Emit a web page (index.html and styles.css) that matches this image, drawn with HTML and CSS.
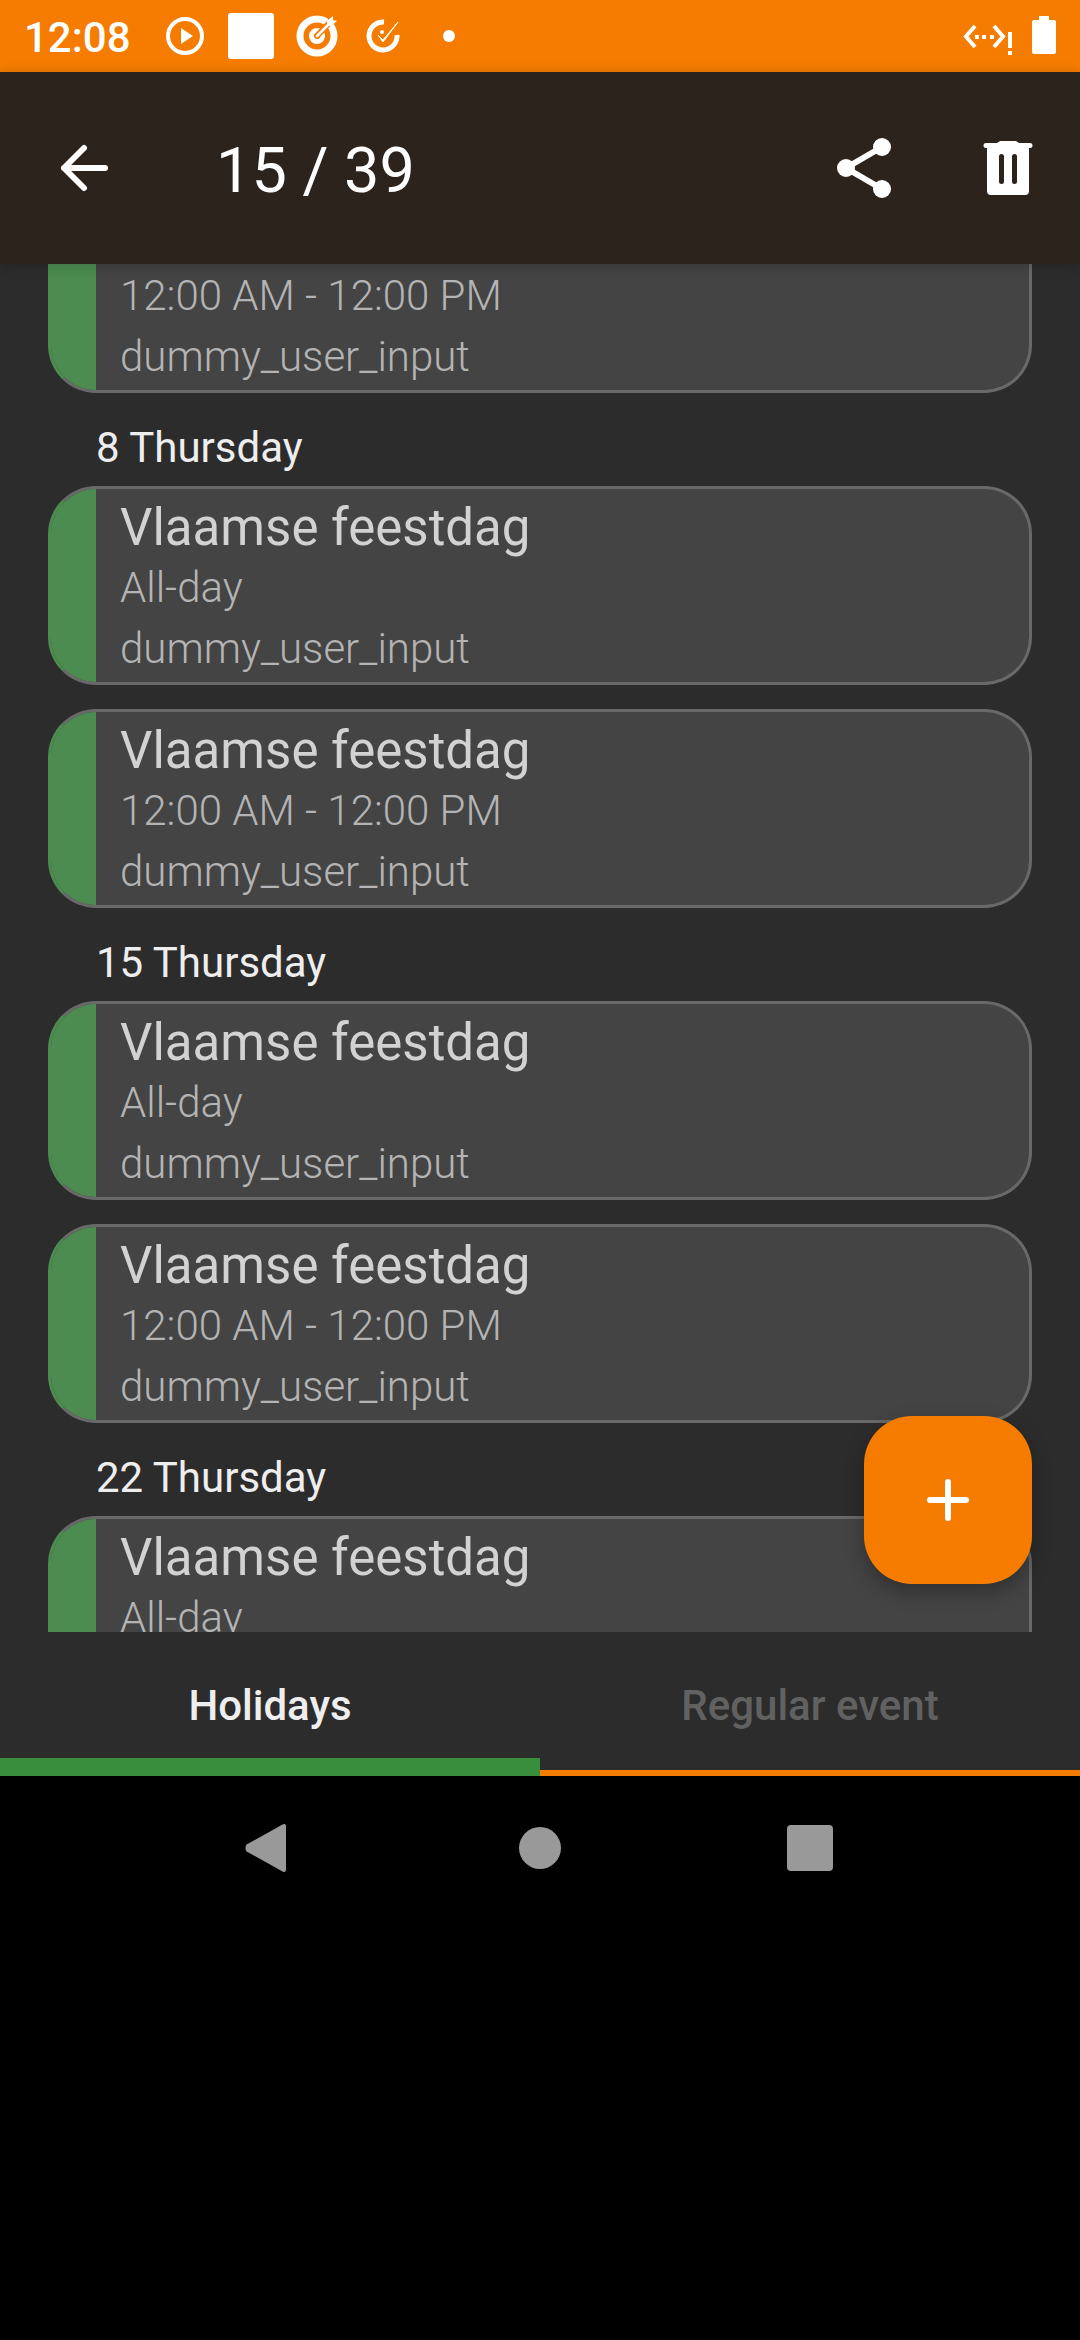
FILE: index.html
```html
<!DOCTYPE html>
<html lang="en">
<head>
<meta charset="utf-8">
<meta name="viewport" content="width=device-width, initial-scale=1">
<title>Calendar events</title>
<link rel="stylesheet" href="styles.css">
</head>
<body>
<div class="screen">
  <div class="status-bar">
    <span class="clock">12:08</span>
    <div class="notifications">
      <svg class="status-icon" viewBox="0 0 66 72"><circle cx="33" cy="36" r="17" fill="none" stroke="#fff" stroke-width="4"/><path d="M29 28v16l12-8z" fill="#fff"/></svg>
      <svg class="status-icon" viewBox="0 0 66 72"><rect x="10" y="13" width="46" height="46" rx="3" fill="#fff"/></svg>
      <svg class="status-icon" viewBox="0 0 66 72"><g fill="none" stroke="#fff"><circle cx="33" cy="36" r="17" stroke-width="7"/><circle cx="33" cy="36" r="5.500" stroke-width="5"/></g><path d="M32 37 49 19" stroke="#f57c00" stroke-width="6"/><path d="M33 36 47 22" stroke="#fff" stroke-width="2.500" stroke-linecap="round"/><path d="M43 25v-4l6-5v4l4 1-6 5z" fill="#fff"/></svg>
      <svg class="status-icon" viewBox="0 0 66 72"><path d="M34 22A14 14 0 1 0 47 35" fill="none" stroke="#fff" stroke-width="5"/><path d="M28 35 33 40 48 22 33 42z" fill="#fff" stroke="#fff" stroke-width="1"/><circle cx="32" cy="32" r="2" fill="#fff"/></svg>
      <svg class="status-icon" viewBox="0 0 66 72"><circle cx="33" cy="36" r="6" fill="#fff"/></svg>
    </div>
    <svg class="network-icon" viewBox="0 0 50 72"><path d="M13 26 4 36.500 13 47M32 26l9 10.500L32 47" fill="none" stroke="#fff" stroke-width="4"/><path d="M13 35h4v4h-4zM20 35h4v4h-4zM28 35h4v4h-4zM46 32h4v16h-4zM46 51h4v4h-4z" fill="#fff"/></svg>
    <svg class="battery-icon" viewBox="0 0 24 72"><path d="M7 16h10v4h5q2 0 2 2v30q0 2-2 2H2q-2 0-2-2V22q0-2 2-2h5z" fill="#fff"/></svg>
  </div>

  <header class="app-bar">
    <button class="icon-button" aria-label="Back"><svg viewBox="0 0 72 72"><path d="M36 16 16 36 36 56M16 36H57" fill="none" stroke="#fff" stroke-width="6" stroke-linecap="round" stroke-linejoin="round"/></svg></button>
    <h1 class="app-title">15 / 39</h1>
    <button class="icon-button" aria-label="Share"><svg viewBox="0 0 72 72"><path d="M54 15 18 36 54 57" fill="none" stroke="#fff" stroke-width="6"/><g fill="#fff"><circle cx="54" cy="15" r="9"/><circle cx="18" cy="36" r="9"/><circle cx="54" cy="57" r="9"/></g></svg></button>
    <button class="icon-button" aria-label="Delete"><svg viewBox="0 0 72 72"><path d="M28 9H44L47 11H58a2 2 0 0 1 0 5H57V59a4 4 0 0 1-4 4H19a4 4 0 0 1-4-4V16H14a2 2 0 0 1 0-5H25z" fill="#fff"/><path d="M29.500 24.500v25M42.500 24.500v25" stroke="#2d231d" stroke-width="5" stroke-linecap="round"/></svg></button>
  </header>

  <main class="content">
    <div class="event-list">
      <section class="day">
        <article class="event event-scrolled">
          <p class="event-line">12:00 AM - 12:00 PM</p>
          <p class="event-line">dummy_user_input</p>
        </article>
      </section>
      <section class="day">
        <h2 class="day-title">8 Thursday</h2>
        <article class="event">
          <h3 class="event-title">Vlaamse feestdag</h3>
          <p class="event-line">All-day</p>
          <p class="event-line">dummy_user_input</p>
        </article>
        <article class="event">
          <h3 class="event-title">Vlaamse feestdag</h3>
          <p class="event-line">12:00 AM - 12:00 PM</p>
          <p class="event-line">dummy_user_input</p>
        </article>
      </section>
      <section class="day">
        <h2 class="day-title">15 Thursday</h2>
        <article class="event">
          <h3 class="event-title">Vlaamse feestdag</h3>
          <p class="event-line">All-day</p>
          <p class="event-line">dummy_user_input</p>
        </article>
        <article class="event">
          <h3 class="event-title">Vlaamse feestdag</h3>
          <p class="event-line">12:00 AM - 12:00 PM</p>
          <p class="event-line">dummy_user_input</p>
        </article>
      </section>
      <section class="day">
        <h2 class="day-title">22 Thursday</h2>
        <article class="event event-short">
          <h3 class="event-title">Vlaamse feestdag</h3>
          <p class="event-line">All-day</p>
        </article>
      </section>
    </div>
    <button class="fab" aria-label="Add event"><svg viewBox="0 0 72 72"><path d="M36 18v36M18 36h36" stroke="#fff" stroke-width="6" stroke-linecap="round"/></svg></button>
  </main>

  <div class="tabs" role="tablist">
    <button class="tab tab-active" role="tab" aria-selected="true">Holidays</button>
    <button class="tab" role="tab" aria-selected="false">Regular event</button>
  </div>

  <nav class="system-nav">
    <button class="nav-button" aria-label="Back"><svg viewBox="0 0 72 72"><path d="M14 34 50 14V58L14 38q-1-2 0-4z" fill="#999" stroke="#999" stroke-width="4" stroke-linejoin="round"/></svg></button>
    <button class="nav-button" aria-label="Home"><svg viewBox="0 0 72 72"><circle cx="36" cy="36" r="21" fill="#999"/></svg></button>
    <button class="nav-button" aria-label="Recents"><svg viewBox="0 0 72 72"><rect x="13" y="13" width="46" height="46" rx="4" fill="#999"/></svg></button>
  </nav>
</div>
</body>
</html>
```
FILE: styles.css
```css
* {
  box-sizing: border-box;
}

body {
  margin: 0;
  background: #000;
  color: #eee;
  font-family: Roboto, "Noto Sans", sans-serif;
  font-size: 42px;
}

h1,
h2,
h3,
p {
  margin: 0;
  font-weight: 400;
}

button {
  padding: 0;
  border: 0;
  background: none;
  color: inherit;
  font: inherit;
}

svg {
  display: block;
}

.screen {
  display: flex;
  flex-direction: column;
  height: 100vh;
  padding-bottom: 420px;
}

.status-bar {
  flex: none;
  display: flex;
  align-items: center;
  height: 72px;
  padding: 0 24px;
  background: #f57c00;
  color: #fff;
}

.clock {
  width: 128px;
  padding-top: 2px;
  font-weight: 500;
}

.notifications {
  display: flex;
  flex: 1;
}

.status-icon {
  width: 66px;
  height: 72px;
}

.network-icon {
  width: 50px;
  height: 72px;
  margin-right: 20px;
}

.battery-icon {
  width: 24px;
  height: 72px;
}

.app-bar {
  flex: none;
  position: relative;
  z-index: 1;
  display: flex;
  align-items: center;
  gap: 72px;
  height: 192px;
  padding: 0 36px 0 48px;
  background: #2d231d;
  box-shadow: 0 2px 12px rgba(0, 0, 0, 0.2);
  color: #fff;
}

.icon-button {
  flex: none;
  width: 72px;
  height: 72px;
}

.app-title {
  flex: 1;
  padding: 4px 0 0 24px;
  font-size: 63px;
}

.content {
  flex: 1;
  position: relative;
  min-height: 0;
  background: #2c2c2c;
}

.event-list {
  height: 100%;
  padding: 0 48px;
  overflow: hidden;
}

.day-title {
  padding: 24px 48px 8px;
  font-size: 42px;
  line-height: 61px;
}

.event {
  position: relative;
  padding: 10px 24px 3px 69px;
  overflow: hidden;
  border: 3px solid #696969;
  border-left-color: #4c8c50;
  border-radius: 48px;
  background: #444;
}

/* Coloured stripe of the event's calendar, drawn over the card border. */
.event::before {
  content: "";
  position: absolute;
  inset: -3px auto -3px -3px;
  width: 48px;
  background: #4c8c50;
}

.event + .event {
  margin-top: 24px;
}

.event-scrolled {
  padding-top: 1px;
  border-top: 0;
  border-top-left-radius: 0;
  border-top-right-radius: 0;
}

.event-short {
  min-height: 199px;
}

.event-title {
  color: #d2d2d2;
  font-size: 51px;
  line-height: 58px;
}

.event-line {
  color: #b4b4b4;
  font-weight: 300;
  line-height: 61px;
}

.fab {
  position: absolute;
  right: 48px;
  bottom: 48px;
  display: grid;
  place-items: center;
  width: 168px;
  height: 168px;
  border-radius: 48px;
  background: #f57c00;
  box-shadow: 0 8px 20px rgba(0, 0, 0, 0.3);
}

.fab svg {
  width: 72px;
  height: 72px;
}

.tabs {
  flex: none;
  display: flex;
  height: 144px;
  background: #2c2c2c;
  box-shadow: inset 0 -6px #f57c00;
}

.tab {
  flex: 1;
  padding-top: 2px;
  color: #616161;
  font-weight: 500;
}

.tab-active {
  box-shadow: inset 0 -18px #388e3c;
  color: #eee;
}

.system-nav {
  flex: none;
  display: flex;
  justify-content: space-around;
  align-items: center;
  height: 144px;
  padding: 0 12.5%;
}

.nav-button {
  width: 72px;
  height: 72px;
}
```
